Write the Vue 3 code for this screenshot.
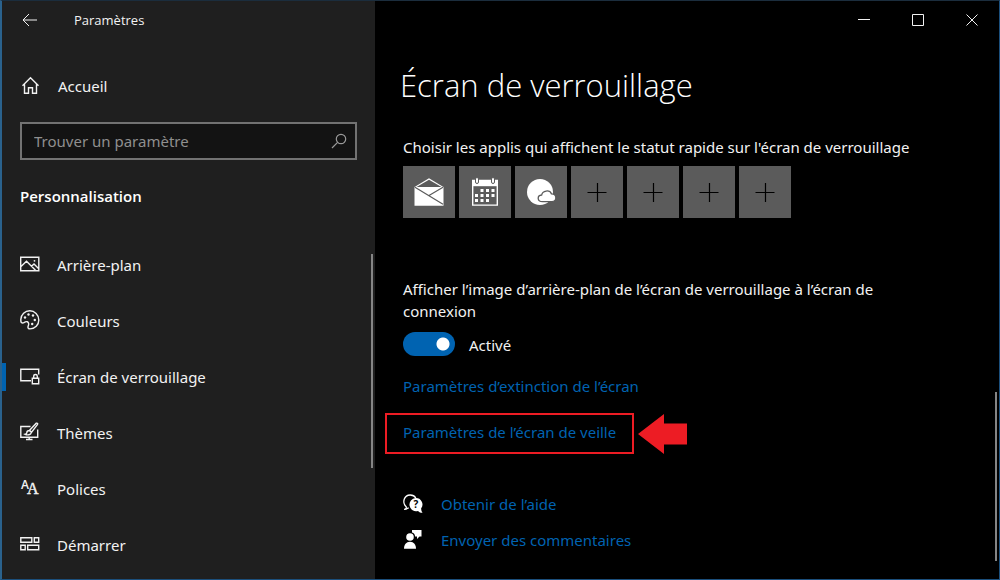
<script setup>
import { ref } from 'vue'

const query = ref('')
const showBackground = ref(true)
const active = ref('lock')

const sections = [
  { id: 'background', label: 'Arrière-plan' },
  { id: 'colors', label: 'Couleurs' },
  { id: 'lock', label: 'Écran de verrouillage' },
  { id: 'themes', label: 'Thèmes' },
  { id: 'fonts', label: 'Polices' },
  { id: 'start', label: 'Démarrer' },
]

const apps = [
  { id: 'mail', label: 'Courrier' },
  { id: 'calendar', label: 'Calendrier' },
  { id: 'weather', label: 'Météo' },
  { id: 'empty-1', label: 'Ajouter une application' },
  { id: 'empty-2', label: 'Ajouter une application' },
  { id: 'empty-3', label: 'Ajouter une application' },
  { id: 'empty-4', label: 'Ajouter une application' },
]
</script>

<template>
  <div class="window">
    <aside class="sidebar">
      <header class="title">
        <button class="back" type="button" aria-label="Retour">
          <svg width="16" height="14" viewBox="0 0 16 14" class="line thin"><path d="M15 7H1.500M7 1L1 7l6 6" /></svg>
        </button>
        <span>Paramètres</span>
      </header>

      <a class="home" href="#accueil">
        <svg width="20" height="20" viewBox="0 0 20 20" class="line">
          <path d="M2.500 9.800L10.500 1.700l8 8.100M4.500 8v9.300h4v-5.500h4v5.500h4V8" />
        </svg>
        <span>Accueil</span>
      </a>

      <form class="search" role="search" @submit.prevent>
        <input v-model="query" type="text" placeholder="Trouver un paramètre" aria-label="Trouver un paramètre" />
        <button type="submit" aria-label="Rechercher">
          <svg width="16" height="16" viewBox="0 0 16 16"><circle cx="10" cy="6" r="4.700" /><path d="M6.600 9.400L1 15" /></svg>
        </button>
      </form>

      <h2>Personnalisation</h2>

      <nav class="sections" aria-label="Personnalisation">
        <a
          v-for="s in sections"
          :key="s.id"
          :href="'#' + s.id"
          :class="{ active: active === s.id }"
          :aria-current="active === s.id ? 'page' : undefined"
          @click="active = s.id"
        >
          <svg width="20" height="20" viewBox="0 0 20 20" class="line">
            <template v-if="s.id === 'background'">
              <path d="M.7 3.200h18.100v13.600H.7zM1 12.500l5.500-5.300 9 9M11.500 12.200l2.500-2.300 4.500 4.500" />
              <circle cx="14.500" cy="6.800" r=".9" class="fill" />
            </template>
            <template v-else-if="s.id === 'colors'">
              <path d="M.8 9.500C1 4.500 5 .8 9.800.8s9 4 9 9.100-3.800 9-8.800 9c-1.600 0-2.300-.9-2-2.200.4-1.300 1-2.100.6-3.500-.5-1.500-1.800-2-3.300-1.300-1.300.6-2 1.300-3.200 1C1 12.700.7 11.300.8 9.500z" />
              <g class="fill">
                <circle cx="5" cy="7.500" r="1.200" /><circle cx="8.500" cy="4.500" r="1.200" /><circle cx="13" cy="5.500" r="1.200" />
                <circle cx="14.800" cy="10" r="1.200" /><circle cx="12.200" cy="14" r="1.200" />
              </g>
            </template>
            <template v-else-if="s.id === 'lock'">
              <path d="M18.700 8.500V3.200H.8v11.500h9.700M8 14.700h3M12.300 12.200h6.400v5.500h-6.400zM13.700 12v-1.700a1.800 1.800 0 0 1 3.600 0V12" />
            </template>
            <template v-else-if="s.id === 'themes'">
              <path d="M10.500 4.500H.8v10.700h16.900V7.500M9.200 15.500v2M6 17.500h6.500M16.300 1.200c1.200-.4 1.800.5 1.100 1.500l-5.800 7.500-2-1.900zM9.300 8.500c-1.600 0-2.400 1-2.500 2.200 0 .9-.8 1.400-1.600 1.600 2.200 1 5.600.8 6.200-2z" />
            </template>
            <template v-else-if="s.id === 'fonts'">
              <text x="1" y="11">
                <tspan class="glyph-sans">A</tspan><tspan dx="-2" dy="5" class="glyph-serif">A</tspan>
              </text>
            </template>
            <template v-else>
              <path d="M.8 3.800h11v4.400H.8zM14.300 3.800h4.400v4.400h-4.400zM.8 11.200h4.400v4.600H.8zM7.700 11.200h11v4.600h-11z" />
            </template>
          </svg>
          <span>{{ s.label }}</span>
        </a>
        <div class="thumb side-thumb" aria-hidden="true"></div>
      </nav>
    </aside>

    <main class="content">
      <div class="controls">
        <button type="button" aria-label="Réduire">
          <svg width="12" height="12" viewBox="0 0 12 12" class="line thin"><path d="M0 5.500h12" /></svg>
        </button>
        <button type="button" aria-label="Agrandir">
          <svg width="12" height="12" viewBox="0 0 12 12" class="line thin"><path d="M.5.5h11v11H.5z" /></svg>
        </button>
        <button type="button" aria-label="Fermer">
          <svg width="12" height="12" viewBox="0 0 12 12" class="line thin"><path d="M.5.5l11 11M11.500.5l-11 11" /></svg>
        </button>
      </div>

      <div class="page">
        <h1>Écran de verrouillage</h1>

        <p class="apps-label">Choisir les applis qui affichent le statut rapide sur l'écran de verrouillage</p>
        <div class="apps">
          <button v-for="a in apps" :key="a.id" type="button" :aria-label="a.label">
            <svg v-if="a.id === 'mail'" width="32" height="32" viewBox="0 0 32 32">
              <path d="M1.500 11L16 2.300 30.500 11v18.700h-29z" fill="#fff" />
              <path d="M3.500 11L16 3.700 28.500 11z" fill="#5b5b5b" />
              <path d="M2 11.200l28 17M30 11.200L16 19.500" fill="none" stroke="#5b5b5b" stroke-width="1.200" />
            </svg>
            <svg v-else-if="a.id === 'calendar'" width="32" height="32" viewBox="0 0 32 32">
              <path d="M3.700 4.500h24.600v24.600H3.700z" fill="none" stroke="#fff" stroke-width="1.400" />
              <path d="M3 4h26v6.200H3z" fill="#fff" />
              <path d="M6.500 3a1.500 1.500 0 0 1 3 0v3a1.500 1.500 0 0 1-3 0zM22.500 3a1.500 1.500 0 0 1 3 0v3a1.500 1.500 0 0 1-3 0z" fill="#fff" stroke="#5b5b5b" />
              <path d="M11.500 13h3v3h-3zM17 13h3v3h-3zM22.500 13h3v3h-3zM6 18h3v3H6zM11.500 18h3v3h-3zM17 18h3v3h-3zM22.500 18h3v3h-3zM6 23h3v3H6zM11.500 23h3v3h-3zM17 23h3v3h-3z" fill="#fff" />
            </svg>
            <svg v-else-if="a.id === 'weather'" width="32" height="32" viewBox="0 0 32 32">
              <circle cx="15" cy="16" r="13" fill="#fff" />
              <path d="M17.500 25.700c-5.500 0-5.700-6.200-.8-6.700.7-4.600 8-5.600 9.700-1.200 5.600-.2 6 7.900.6 7.900z" fill="#fff" stroke="#5b5b5b" stroke-width="1.300" />
            </svg>
            <svg v-else width="20" height="20" viewBox="0 0 20 20">
              <path d="M.5 10.500h19M10.500 1v19" fill="none" stroke="#000" stroke-width="1.200" />
            </svg>
          </button>
        </div>

        <label class="toggle-label" for="show-background">Afficher l’image d’arrière-plan de l’écran de verrouillage à l’écran de connexion</label>
        <div class="toggle">
          <input id="show-background" v-model="showBackground" type="checkbox" role="switch" />
          <span>{{ showBackground ? 'Activé' : 'Désactivé' }}</span>
        </div>

        <a class="link" href="#extinction">Paramètres d’extinction de l’écran</a>
        <div class="marked">
          <div class="frame"><a class="link" href="#veille">Paramètres de l’écran de veille</a></div>
          <svg width="49" height="40" viewBox="0 0 49 40" aria-hidden="true">
            <path d="M0 20L26 0v9.500h23v21H26V40z" fill="#ed1c24" />
          </svg>
        </div>

        <ul class="help">
          <li>
            <svg width="20" height="20" viewBox="0 0 20 20">
              <path d="M2.500 15.500c.8-1 1-1.800.8-2.600C-1.500 8.500 1.200 1 7.200 1c2.600 0 4.500 1.200 5.600 3" fill="none" stroke="#fff" stroke-width="1.300" />
              <path d="M1 15.300c2 0 3.500-.6 4.700-1.500" fill="none" stroke="#fff" stroke-width="1.300" />
              <path d="M12.700 4a6.500 6.500 0 0 1 5.500 10.300c-.2 1.700.3 3.200 1.300 4.500-1.900 0-3.400-.7-4.500-1.900A6.600 6.600 0 1 1 12.700 4z" fill="#fff" />
              <text x="12.800" y="14" text-anchor="middle" class="mark">?</text>
            </svg>
            <a class="link" href="#aide">Obtenir de l’aide</a>
          </li>
          <li>
            <svg width="20" height="20" viewBox="0 0 20 20" fill="#fff">
              <path d="M9 0h9.500v6.500h-2L14 9V6.500h-2C12 4.500 11 3 9 2.500z" />
              <circle cx="7" cy="7" r="3.800" />
              <path d="M1 18.700c0-4 2.200-7 6-7s6 3 6 7z" />
            </svg>
            <a class="link" href="#commentaires">Envoyer des commentaires</a>
          </li>
        </ul>
      </div>
      <div class="thumb main-thumb" aria-hidden="true"></div>
    </main>
  </div>
</template>

<style>
body {
  background: #000;
}
</style>

<style scoped>
* {
  box-sizing: border-box;
}
.window {
  display: flex;
  height: 100vh;
  overflow: hidden;
  border: 1px solid #1b4f7c;
  border-top-color: #1b2d3d;
  border-left: 2px solid #2a628d;
  background: #000;
  color: #f2f2f2;
  font: 15px/22px "Noto Sans", "Open Sans", sans-serif;
}
button {
  display: flex;
  align-items: center;
  justify-content: center;
  padding: 0;
  border: 0;
  background: none;
  color: inherit;
}
a {
  color: inherit;
  text-decoration: none;
}
h1, h2, p, ul {
  margin: 0;
  padding: 0;
}
svg {
  flex: none;
  overflow: visible;
}
.line {
  fill: none;
  stroke: #f2f2f2;
  stroke-width: 1.4;
}
.thin {
  stroke-width: 1;
}
.line .fill {
  fill: #f2f2f2;
  stroke: none;
}
.line text {
  fill: #f2f2f2;
  stroke: none;
}
.glyph-sans {
  font: 600 12px "Open Sans", sans-serif;
}
.glyph-serif {
  font: 16px "Liberation Serif", serif;
  stroke: #f2f2f2;
  stroke-width: 0.4;
}
.mark {
  font: bold 10px "Open Sans", sans-serif;
  fill: #000;
}

.sidebar {
  position: relative;
  display: flex;
  flex-direction: column;
  flex: none;
  width: 373px;
  background: #1f1f1f;
}
.title {
  display: flex;
  align-items: center;
  gap: 36px;
  height: 38px;
  padding-left: 20px;
  font-family: "Open Sans", sans-serif;
  font-size: 13px;
}
.back {
  width: 16px;
  height: 24px;
}
.home {
  display: flex;
  align-items: center;
  gap: 18px;
  height: 56px;
  margin-top: 19px;
  padding-left: 18px;
}
.search {
  display: flex;
  align-items: center;
  height: 38px;
  margin: 8px 18px 0;
  padding: 0 8px 0 12px;
  border: 2px solid #727272;
  background: #131313;
}
.search input {
  flex: 1;
  min-width: 0;
  padding: 0;
  border: 0;
  outline: 0;
  background: none;
  color: #f2f2f2;
  font: inherit;
}
.search input::placeholder {
  color: #8f8f8f;
  opacity: 1;
}
.search svg {
  fill: none;
  stroke: #9a9a9a;
  stroke-width: 1.2;
}
h2 {
  margin: 25px 18px 0;
  font-family: "Open Sans", sans-serif;
  font-size: 15px;
  font-weight: 600;
  line-height: 22px;
  color: #fff;
}
.sections {
  position: relative;
  margin-top: 30px;
}
.sections a {
  display: flex;
  align-items: center;
  gap: 17px;
  height: 56px;
  padding-left: 18px;
}
.sections svg {
  margin-bottom: 3px;
}
.sections .active {
  background: linear-gradient(#0063b1, #0063b1) left center / 4px 28px no-repeat;
}
.thumb {
  position: absolute;
  width: 2px;
  background: #858585;
}
.side-thumb {
  top: 17px;
  right: 2px;
  height: 214px;
}
.content {
  position: relative;
  flex: 1;
  min-width: 0;
}
.main-thumb {
  right: 2px;
  bottom: 18px;
  height: 169px;
}
.controls {
  display: flex;
  justify-content: flex-end;
  height: 38px;
}
.controls button {
  width: 54px;
}
.page {
  padding: 0 90px 0 28px;
}
h1 {
  margin: 24px 0 0 -3px;
  font-family: "Open Sans", sans-serif;
  font-size: 31px;
  font-weight: 300;
  line-height: 44px;
  color: #fff;
}
.apps-label {
  margin-top: 29px;
  white-space: nowrap;
}
.apps {
  display: flex;
  gap: 4px;
  margin-top: 8px;
}
.apps button {
  width: 52px;
  height: 52px;
  background: #5b5b5b;
}
.toggle-label {
  display: block;
  margin-top: 60px;
}
.toggle {
  display: flex;
  align-items: center;
  gap: 14px;
  height: 24px;
  margin-top: 10px;
}
.toggle span {
  padding-top: 2px;
}
.toggle input {
  width: 52px;
  height: 24px;
  margin: 0;
  appearance: none;
  border-radius: 12px;
  background: radial-gradient(circle at 40px 12px, #fff 6px, transparent 7px) #0063b1;
}
.toggle input:not(:checked) {
  background: radial-gradient(circle at 12px 12px, #fff 6px, transparent 7px) #333;
}
.link {
  color: #0063b1;
}
.page > .link {
  display: table;
  margin-top: 19px;
}
.marked {
  display: flex;
  align-items: center;
  gap: 4px;
  margin: 16px 0 0 -18px;
}
.frame {
  padding: 6px 16px 9px;
  border: 2px solid #ed1c24;
}
.help {
  display: grid;
  gap: 14px;
  margin-top: 39px;
  list-style: none;
}
.help li {
  display: flex;
  align-items: center;
  gap: 18px;
}
</style>
